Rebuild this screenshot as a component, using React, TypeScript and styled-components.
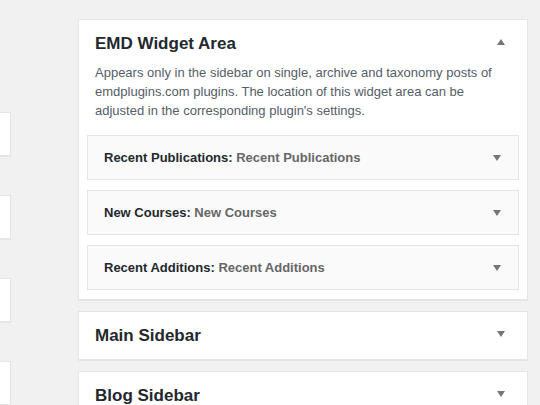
import React from "react";
import styled, { createGlobalStyle } from "styled-components";

const GlobalStyle = createGlobalStyle`
	html, body {
		margin: 0;
		padding: 0;
		background: #f1f1f1;
		font-family: "Liberation Sans", Arial, sans-serif;
		color: #23282d;
	}
`;

const Page = styled.div`
	display: flex;
	align-items: flex-start;
	height: 405px;
	overflow: hidden;
`;

const LeftColumn = styled.div`
	display: flex;
	flex-direction: column;
	gap: 39px;
	padding-top: 112px;
	width: 11px;
	flex-shrink: 0;
`;

const StubBox = styled.div`
	background: #fff;
	border: 1px solid #e5e5e5;
	border-left: none;
	height: 42px;
	box-shadow: 0 1px 1px rgba(0, 0, 0, 0.04);
`;

const Sidebars = styled.div`
	display: flex;
	flex-direction: column;
	gap: 11px;
	margin-left: 67px;
	padding-top: 19px;
	width: 450px;
`;

const Panel = styled.div<{ $open?: boolean }>`
	background: #fff;
	border: 1px solid #e5e5e5;
	box-shadow: 0 1px 1px rgba(0, 0, 0, 0.04);
	padding: 0 8px ${(p) => (p.$open ? "9px" : "0")};
`;

const PanelHeader = styled.div`
	display: flex;
	align-items: center;
	justify-content: space-between;
	padding: 12px 8px 11px 8px;
`;

const PanelTitle = styled.h2`
	margin: 0;
	font-size: 17px;
	line-height: 24px;
	font-weight: 700;
	color: #23282d;
`;

const Description = styled.p`
	margin: -4px 8px 15px;
	font-size: 13px;
	line-height: 19px;
	color: #555d66;
`;

const WidgetList = styled.div`
	display: flex;
	flex-direction: column;
	gap: 10px;
`;

const Widget = styled.div`
	display: flex;
	align-items: center;
	justify-content: space-between;
	height: 43px;
	padding: 0 17px 0 16px;
	background: #fafafa;
	border: 1px solid #e5e5e5;
	font-size: 13px;
	font-weight: 700;
	color: #23282d;
`;

const WidgetSub = styled.span`
	color: #666;
`;

const ArrowSlot = styled.span<{ $offset: number; $lift?: number }>`
	display: flex;
	margin-right: ${(p) => p.$offset}px;
	margin-top: ${(p) => -(p.$lift ?? 0)}px;
`;

const Arrow = ({ up }: { up?: boolean }) => (
	<svg width="8" height="6" viewBox="0 0 8 6">
		<path d={up ? "M0 6 L4 0 L8 6 Z" : "M0 0 L8 0 L4 6 Z"} fill="#72777c" />
	</svg>
);

const widgets = [
	["Recent Publications", "Recent Publications"],
	["New Courses", "New Courses"],
	["Recent Additions", "Recent Additions"],
];

export default function App() {
	return (
		<Page>
			<GlobalStyle />
			<LeftColumn>
				<StubBox />
				<StubBox />
				<StubBox />
				<StubBox />
			</LeftColumn>
			<Sidebars>
				<Panel $open>
					<PanelHeader>
						<PanelTitle>EMD Widget Area</PanelTitle>
						<ArrowSlot $offset={6} $lift={4}>
							<Arrow up />
						</ArrowSlot>
					</PanelHeader>
					<Description>
						Appears only in the sidebar on single, archive and taxonomy posts of
						emdplugins.com plugins. The location of this widget area can be
						adjusted in the corresponding plugin's settings.
					</Description>
					<WidgetList>
						{widgets.map(([name, title]) => (
							<Widget key={name}>
								<span>
									{name}: <WidgetSub>{title}</WidgetSub>
								</span>
								<Arrow />
							</Widget>
						))}
					</WidgetList>
				</Panel>
				<Panel>
					<PanelHeader>
						<PanelTitle>Main Sidebar</PanelTitle>
						<ArrowSlot $offset={6} $lift={4}>
							<Arrow />
						</ArrowSlot>
					</PanelHeader>
				</Panel>
				<Panel>
					<PanelHeader>
						<PanelTitle>Blog Sidebar</PanelTitle>
						<ArrowSlot $offset={6} $lift={4}>
							<Arrow />
						</ArrowSlot>
					</PanelHeader>
				</Panel>
			</Sidebars>
		</Page>
	);
}
